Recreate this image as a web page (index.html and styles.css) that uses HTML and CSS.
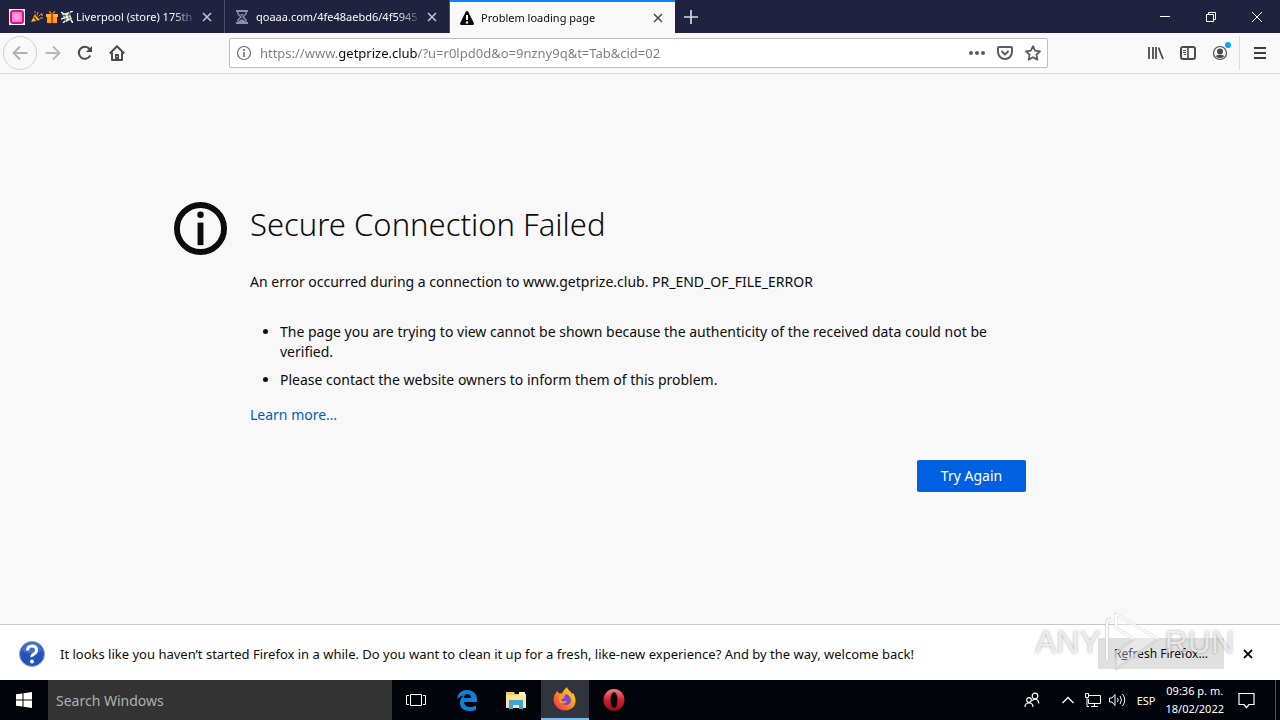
FILE: index.html
```html
<!DOCTYPE html>
<html lang="en">
<head>
    <meta charset="UTF-8">
    <meta name="viewport" content="width=device-width, initial-scale=1.0">
    <title>Problem loading page</title>
    <link rel="stylesheet" href="styles.css">
</head>
<body>
    <!-- Tabs -->
    <header class="tab-bar">
        <div class="tab">
            <svg class="favicon" width="16" height="16" viewBox="0 0 16 16"><rect width="16" height="16" fill="#fff"/><rect x="2" y="2" width="12" height="12" rx="2" fill="#ff7fd0" stroke="#e0108c" stroke-width="2"/><rect x="5" y="5" width="6" height="6" fill="#ff9be0"/></svg>
            <span class="tab-title">
                <svg width="12" height="12" viewBox="0 0 12 12"><path d="M0 11L4 3l5 6z" fill="#ffb52b"/><path d="M3 6l3 4M5 4l4 4" stroke="#6b3a10" stroke-width="1.500"/><path d="M6 4l1-3M8 5l3-3M9 7h3" stroke="#d8a03a"/><circle cx="4" cy="1" r="1" fill="#e53c53"/><circle cx="11" cy="4" r="1" fill="#3fa2e8"/></svg>
                <svg width="12" height="12" viewBox="0 0 12 12"><path d="M1 4h10v8H1z" fill="#ffa000"/><path d="M0 3h12v3H0z" fill="#ffb52b"/><path d="M5 3h2v9H5z" fill="#e53c1c"/><path d="M6 3C3 3 2 0 4 0l2 3 2-3c2 0 1 3-2 3z" fill="#ff7a1a"/></svg>
                <svg width="12" height="12" viewBox="0 0 12 12"><path d="M1 3l7-2 3 7-6 3z" fill="#e6edc8"/><path d="M2 4l7 3M4 9l5-7" stroke="#4d7350" stroke-width="1.500"/><path d="M0 1l3 2M0 8l3-1M2 12l2-2M9 1l3-1M10 9l2 3" stroke="#fff" stroke-width="1.500"/><circle cx="6" cy="6" r="1.500" fill="#fff"/></svg>
                Liverpool (store) 175th
            </span>
            <button class="tab-close" aria-label="Close tab"><svg width="10" height="10" viewBox="0 0 10 10"><path d="M1 1l8 8M9 1L1 9" stroke="currentColor" stroke-width="1.500"/></svg></button>
        </div>
        <div class="tab">
            <svg class="favicon" width="16" height="16" viewBox="0 0 16 16"><path d="M2 1h12v2H2zM2 13h12v2H2z" fill="#8f8fa6"/><path d="M4 3v2l3 3-3 3v2M12 3v2L9 8l3 3v2" fill="none" stroke="#8f8fa6" stroke-width="1.400"/><path d="M5 12l3-2 3 2v1H5zM6 5h4L8 7z" fill="#8f8fa6"/></svg>
            <span class="tab-title">qoaaa.com/4fe48aebd6/4f5945</span>
            <button class="tab-close" aria-label="Close tab"><svg width="10" height="10" viewBox="0 0 10 10"><path d="M1 1l8 8M9 1L1 9" stroke="currentColor" stroke-width="1.500"/></svg></button>
        </div>
        <div class="tab active">
            <svg class="favicon" width="16" height="16" viewBox="0 0 16 16"><path d="M8 1c.6 0 1 .3 1.300.8l5.500 11.200c.4 1-.1 2-1.200 2H2.400c-1.100 0-1.600-1-1.200-2L6.700 1.800C7 1.300 7.400 1 8 1z" fill="#0c0c0d"/><path d="M8 5v5" stroke="#fff" stroke-width="2"/><circle cx="8" cy="12.500" r="1.200" fill="#fff"/></svg>
            <span class="tab-title">Problem loading page</span>
            <button class="tab-close" aria-label="Close tab"><svg width="10" height="10" viewBox="0 0 10 10"><path d="M1 1l8 8M9 1L1 9" stroke="currentColor" stroke-width="1.500"/></svg></button>
        </div>
        <button class="new-tab" aria-label="New tab"><svg width="14" height="14" viewBox="0 0 14 14"><path d="M7 0v14M0 7h14" stroke="currentColor" stroke-width="1.700"/></svg></button>
        <div class="window-controls">
            <button aria-label="Minimize"><svg width="10" height="10" viewBox="0 0 10 10"><path d="M0 4.500h10" stroke="#fff"/></svg></button>
            <button aria-label="Restore"><svg width="10" height="10" viewBox="0 0 10 10"><path d="M.5 2.500h7v7h-7zM2.500 2.500v-2h7v7h-2" fill="none" stroke="#fff"/></svg></button>
            <button aria-label="Close"><svg width="10" height="10" viewBox="0 0 10 10"><path d="M0 0l10 10M10 0L0 10" stroke="#fff"/></svg></button>
        </div>
    </header>

    <!-- Toolbar -->
    <nav class="toolbar">
        <div class="nav-buttons">
            <button class="back" aria-label="Back" disabled><svg width="16" height="16" viewBox="0 0 16 16"><path d="M15.500 8H1.500M8 1.500L1.500 8 8 14.500" fill="none" stroke="#b1b1b3" stroke-width="2"/></svg></button>
            <button aria-label="Forward" disabled><svg width="16" height="16" viewBox="0 0 16 16"><path d="M.5 8h14M8 1.500L14.500 8 8 14.500" fill="none" stroke="#b8b8ba" stroke-width="2"/></svg></button>
            <button aria-label="Reload"><svg width="16" height="16" viewBox="0 0 16 16"><path d="M13.200 10.500A6 6 0 1 1 12.500 4" fill="none" stroke="#4a4a4d" stroke-width="2"/><path d="M15 1v6H9z" fill="#4a4a4d"/></svg></button>
            <button aria-label="Home"><svg width="16" height="16" viewBox="0 0 16 16"><path d="M.8 8.500L8 1.300l7.200 7.200M3 7.500V15h10V7.500" fill="none" stroke="#4a4a4d" stroke-width="2" stroke-linejoin="round"/><path d="M6 9h4v6H6z" fill="#4a4a4d"/><path d="M8 11v1" stroke="#fff"/></svg></button>
        </div>
        <div class="url-bar">
            <svg width="16" height="16" viewBox="0 0 16 16"><circle cx="8" cy="8" r="6.500" fill="none" stroke="#6b6b6e" stroke-width="1.200"/><path d="M8 7v5M8 4v2" stroke="#6b6b6e" stroke-width="1.600"/></svg>
            <input class="url-input" type="text" aria-label="Address" value="https://www.getprize.club/?u=r0lpd0d&amp;o=9nzny9q&amp;t=Tab&amp;cid=02">
            <button aria-label="Page actions"><svg width="16" height="16" viewBox="0 0 16 16" fill="#5b5b5e"><circle cx="2" cy="8" r="2"/><circle cx="8" cy="8" r="2"/><circle cx="14" cy="8" r="2"/></svg></button>
            <button aria-label="Save to Pocket"><svg width="16" height="16" viewBox="0 0 16 16" fill="none" stroke="#5b5b5e" stroke-width="2" stroke-linecap="round" stroke-linejoin="round"><path d="M2 2h12q1 0 1 1v4a7 7 0 0 1-14 0V3q0-1 1-1z"/><path d="M5 6.500l3 3 3-3"/></svg></button>
            <button aria-label="Bookmark"><svg width="16" height="16" viewBox="0 0 16 16"><path d="M8 1.200l2.100 4.400 4.900.7-3.500 3.400.8 4.900L8 12.300l-4.300 2.300.8-4.900L1 6.300l4.900-.7z" fill="none" stroke="#5b5b5e" stroke-width="1.800" stroke-linejoin="round"/></svg></button>
        </div>
        <div class="tools">
            <button aria-label="Library"><svg width="16" height="16" viewBox="0 0 16 16"><path d="M1 2v12M5 2v12M8 2v12M10.500 2.500L15 14" stroke="#4a4a4d" stroke-width="1.800"/></svg></button>
            <button aria-label="Sidebars"><svg width="16" height="16" viewBox="0 0 16 16" fill="none" stroke="#4a4a4d"><rect x="1" y="2" width="14" height="12" rx="2" stroke-width="2"/><path d="M8 2v12" stroke-width="1.600"/><path d="M3 5.500h3M3 7.500h3M4 9.500h2"/></svg></button>
            <button class="account" aria-label="Account"><svg width="16" height="16" viewBox="0 0 16 16"><circle cx="8" cy="8" r="6.500" fill="none" stroke="#4a4a4d" stroke-width="1.200"/><circle cx="8" cy="6.500" r="3" fill="#4a4a4d"/><path d="M3.500 11q4.500-2.500 9 0Q8 15.500 3.500 11z" fill="#4a4a4d"/></svg><span class="badge"></span></button>
            <button class="menu" aria-label="Open menu"><svg width="12" height="12" viewBox="0 0 12 12"><path d="M0 1h12M0 6h12M0 11h12" stroke="#3d3d40" stroke-width="2"/></svg></button>
        </div>
    </nav>

    <main class="content">
        <div class="error-page">
            <svg class="info-icon" width="53" height="53" viewBox="0 0 54 54"><circle cx="27" cy="27" r="24" fill="none" stroke="#0c0c0d" stroke-width="6"/><circle cx="27" cy="13" r="3.300" fill="#0c0c0d"/><path d="M27 21v23" stroke="#0c0c0d" stroke-width="6"/></svg>
            <div class="error-text">
                <h1>Secure Connection Failed</h1>
                <p class="description">An error occurred during a connection to www.getprize.club. PR_END_OF_FILE_ERROR</p>
                <ul>
                    <li>The page you are trying to view cannot be shown because the authenticity of the received data could not be verified.</li>
                    <li>Please contact the website owners to inform them of this problem.</li>
                </ul>
                <a class="learn-more" href="#">Learn more…</a>
                <div class="actions">
                    <button class="try-again">Try Again</button>
                </div>
            </div>
        </div>
    </main>

    <!-- Notification bar -->
    <section class="notification">
        <svg width="28" height="28" viewBox="0 0 28 28"><circle cx="14" cy="14" r="12.500" fill="#2352b8" stroke="#8aa5dc"/><path d="M4 11a10 9 0 0 1 20 0q-10 5-20 0z" fill="#3f6fce"/><path d="M9.500 10.500q0-4.500 4.500-4.500t4.500 4q0 2.500-2.500 4t-2 3" fill="none" stroke="#fff" stroke-width="3"/><circle cx="14" cy="21.500" r="2" fill="#fff"/></svg>
        <p>It looks like you haven’t started Firefox in a while. Do you want to clean it up for a fresh, like-new experience? And by the way, welcome back!</p>
        <button class="refresh">R<u>e</u>fresh Firefox…</button>
        <button class="dismiss" aria-label="Dismiss"><svg width="10" height="10" viewBox="0 0 10 10"><path d="M1 1l8 8M9 1L1 9" stroke="#111" stroke-width="1.800"/></svg></button>
        <div class="watermark">
            <span>ANY</span>
            <svg width="60" height="64" viewBox="0 0 60 64"><path d="M13 4l42 25-42 30V42l18-13-18-11z" fill="#fff" fill-opacity=".3" stroke="#d4d4d4" stroke-opacity=".8" stroke-width="3" stroke-linejoin="round"/><path d="M4 50V13q0-3 4-3" fill="none" stroke="#d4d4d4" stroke-opacity=".8" stroke-width="4"/><path d="M4 50V13q0-3 4-3M13 4v14l18 11M13 4l42 25" fill="none" stroke="#fff" stroke-opacity=".9" stroke-width="2"/></svg>
            <span>RUN</span>
        </div>
    </section>

    <!-- Taskbar -->
    <footer class="taskbar">
        <button class="start" aria-label="Start"><svg width="16" height="16" viewBox="0 0 16 16" fill="#fff"><path d="M0 2.300L6.500 1.400v6.100H0zM7.500 1.200L16 0v7.500H7.500zM0 8.500h6.500v6.100L0 13.700zM7.500 8.500H16V16l-8.500-1.200z"/></svg></button>
        <input class="search" type="text" placeholder="Search Windows" aria-label="Search Windows">
        <div class="apps">
            <button class="task-view" aria-label="Task View"><svg width="20" height="14" viewBox="0 0 20 14" fill="none" stroke="#fff"><path d="M4.500 1.500h11v11h-11zM3 2.500H.5v9H3M17 2.500h2.500v9H17"/></svg></button>
            <button aria-label="Edge"><svg width="22" height="22" viewBox="0 0 22 22"><path d="M1 10C2 4 6 1 11 1c6 0 10 4 10 9v3H8c0 3 3 5 6 5 2 0 4-.5 6-1.500v4c-2 1-4 1.500-7 1.500-6 0-9-4-9-8 0-4 2-6 4-7.500C5 7 2.500 8 1 10zm7-1h7c0-3-1.500-4-3.500-4S8 6.500 8 9z" fill="#0f7fdc"/></svg></button>
            <button aria-label="File Explorer"><svg width="22" height="20" viewBox="0 0 22 20"><path d="M1 2h8l1 2h11v14H1z" fill="#f3cc6a"/><path d="M1 5h20v13H1z" fill="#ffe49a"/><path d="M4 10h14v9h-4v-4H8v4H4z" fill="#3da5d2"/><path d="M14 2h6v3h-6z" fill="#fff0c2"/></svg></button>
            <button class="running" aria-label="Firefox"><svg width="24" height="24" viewBox="0 0 24 24"><defs><linearGradient id="fox" x1="1" y1="0" x2="0" y2="1"><stop offset="0" stop-color="#ffe636"/><stop offset=".5" stop-color="#ff8a1e"/><stop offset="1" stop-color="#f0225c"/></linearGradient></defs><path d="M4 4c1 1 1.500 1.500 2 2.500 1.500-.5 2.500 0 3 0C10 4 12 2 14 0c.5 3 4 4 5 7l1-1c5 7 3 17-8 17.500C3 23.500-2 14 2 7c.5 0 1-1 2-3z" fill="url(#fox)"/><path d="M7 12c0-3 3-2 5-3 0-2 2-2 3-1 5 4 3 10-2 10-4 0-6-3-6-6z" fill="#7546dc"/><path d="M6 9c2-1 4 0 6 1-1 2-3 1-4 3 2 2 4 2 6 0 0 4-6 5-8 1z" fill="#ff9a22"/></svg></button>
            <button aria-label="Opera"><svg width="22" height="22" viewBox="0 0 22 22"><defs><linearGradient id="opera" x1="0" y1="0" x2="0" y2="1"><stop offset="0" stop-color="#f3808a"/><stop offset=".5" stop-color="#d41f2d"/><stop offset="1" stop-color="#8c0c16"/></linearGradient></defs><ellipse cx="11" cy="11" rx="10.500" ry="11" fill="url(#opera)"/><ellipse cx="11" cy="11" rx="3.500" ry="8" fill="#08080c"/></svg></button>
        </div>
        <div class="tray">
            <svg width="16" height="16" viewBox="0 0 16 16" fill="none" stroke="#fff" stroke-width="1.200"><circle cx="11" cy="4" r="2.800"/><circle cx="5" cy="8" r="2.300"/><path d="M1 15q0-4 4-4t4 4M8 8.500q6-3.500 7 3"/></svg>
            <svg class="chevron" width="12" height="8" viewBox="0 0 12 8" fill="none" stroke="#fff" stroke-width="1.300"><path d="M.5 7L6 1.500 11.500 7"/></svg>
            <svg width="17" height="16" viewBox="0 0 17 16" fill="none" stroke="#fff"><path d="M5 3.500h11.500v8H4.500V7M10.500 11.500v3M7 14.500h7M1.500 1.500h3v4h-3zM3 5.500v9h2"/></svg>
            <svg width="17" height="14" viewBox="0 0 17 14" fill="none" stroke="#fff"><path d="M.5 5H3l3-3.500v11L3 9H.5zM8.500 5q1.500 2 0 4M11 3q3 4 0 8M13.500 1q4.500 6 0 12"/></svg>
            <span class="lang">ESP</span>
            <time class="clock" datetime="2022-02-18T21:36">09:36 p. m.<br>18/02/2022</time>
            <svg width="17" height="17" viewBox="0 0 17 17" fill="none" stroke="#fff" stroke-width="1.200"><path d="M1 1.500h15v11h-5L8.500 15.500 6 12.500H1z"/></svg>
        </div>
    </footer>
</body>
</html>
```
FILE: styles.css
```css
* {
    box-sizing: border-box;
}
body {
    font-family: "Noto Sans", "Open Sans", sans-serif;
    font-size: 14px;
    color: #0c0c0d;
    background: #f9f9fa;
    margin: 0;
    min-height: 100vh;
    display: flex;
    flex-direction: column;
}
button {
    font: inherit;
    color: inherit;
    background: none;
    border: none;
    padding: 0;
    display: flex;
    align-items: center;
    justify-content: center;
}
svg {
    flex: none;
}

/* Tabs */
.tab-bar {
    display: flex;
    height: 33px;
    background: #202340;
    color: #f9f9fa;
    font-size: 11px;
}
.tab {
    display: flex;
    align-items: center;
    flex: 0 1 225px;
    min-width: 0;
    padding: 0 9px;
    border-right: 1px solid #4d4f68;
}
.tab-title {
    display: flex;
    align-items: center;
    gap: 3px;
    flex: 1;
    min-width: 0;
    margin-left: 6px;
    overflow: hidden;
    white-space: nowrap;
    mask-image: linear-gradient(to left, transparent, #000 24px);
}
.tab-close {
    width: 16px;
    height: 24px;
    margin-left: 2px;
    color: #c8c8d4;
}
.tab.active {
    background: #f9f9fa;
    color: #0c0c0d;
    border-top: 2px solid #0a84ff;
    border-right: none;
}
.active .tab-close {
    color: #4a4a4d;
}
.new-tab {
    width: 32px;
    color: #d8d8e2;
}
.window-controls {
    display: flex;
    margin-left: auto;
}
.window-controls button {
    width: 46px;
}

/* Toolbar */
.toolbar {
    display: flex;
    align-items: center;
    height: 41px;
    background: #f9f9fa;
    border-bottom: 1px solid #dcdcdf;
}
.nav-buttons {
    display: flex;
    align-items: center;
    flex: 1;
    padding-left: 3px;
}
.nav-buttons button {
    width: 32px;
    height: 34px;
}
.nav-buttons .back {
    width: 34px;
    border: 1px solid #d0d0d3;
    border-radius: 50%;
}
.url-bar {
    display: flex;
    align-items: center;
    gap: 12px;
    width: 64%;
    max-width: 821px;
    height: 30px;
    margin-right: 6px;
    padding: 0 6px;
    background: #fff;
    border: 1px solid #bdbdc0;
    border-radius: 2px;
}
.url-input {
    flex: 1;
    min-width: 0;
    height: 24px;
    margin-left: -4px;
    padding: 0;
    border: none;
    outline: none;
    font: inherit;
    font-size: 13px;
    /* host name is darker than the rest of the address */
    background: linear-gradient(to right, #7c7c80 78px, #0c0c0d 78px, #0c0c0d 157px, #7c7c80 157px);
    background-clip: text;
    -webkit-background-clip: text;
    -webkit-text-fill-color: transparent;
}
.tools {
    display: flex;
    align-items: center;
    justify-content: flex-end;
    flex: 1;
}
.tools button {
    position: relative;
    width: 32px;
    height: 34px;
}
.badge {
    position: absolute;
    top: 6px;
    right: 5px;
    width: 6px;
    height: 6px;
    border-radius: 50%;
    background: #00a8f0;
}
.tools .menu {
    width: 41px;
    margin-left: 3px;
    border-left: 1px solid #dcdcdf;
}

/* Error page */
.content {
    flex: 1;
    background: #f8f8f8;
}
.error-page {
    display: flex;
    gap: 23px;
    max-width: 932px;
    margin: 0 auto;
    padding: 128px 80px 0 0;
}
.error-text {
    flex: 1;
    line-height: 20px;
}
h1 {
    margin: 0;
    font-size: 31px;
    font-weight: 300;
    line-height: 44px;
}
.description {
    margin: 26px 0 30px;
}
ul {
    margin: 0;
    padding-left: 30px;
}
li {
    margin-bottom: 8px;
}
.learn-more {
    display: inline-block;
    margin-top: 7px;
    color: #0060b6;
    text-decoration: none;
}
.actions {
    display: flex;
    justify-content: flex-end;
    margin-top: 35px;
}
.try-again {
    min-width: 109px;
    height: 32px;
    color: #fff;
    background: #0060df;
    border-radius: 2px;
}

/* Notification bar */
.notification {
    position: relative;
    display: flex;
    align-items: center;
    height: 56px;
    padding: 2px 24px 0 18px;
    background: #fff;
    border-top: 1px solid #c8c8c8;
    font-size: 12px;
}
.notification p {
    flex: 1;
    margin: 0 0 0 14px;
    font-size: 13px;
}
.refresh {
    display: block;
    width: 126px;
    height: 31px;
    background: #e0e0e0;
}
.dismiss {
    width: 16px;
    height: 24px;
    margin-left: 16px;
}
.watermark {
    position: absolute;
    right: 46px;
    bottom: 6px;
    display: flex;
    align-items: center;
    gap: 2px;
    font-family: "Liberation Sans Narrow", "Liberation Sans", sans-serif;
    font-size: 32px;
    color: rgba(255, 255, 255, 0.7);
    text-shadow: 0 0 3px rgba(0, 0, 0, 0.35);
    pointer-events: none;
}

/* Taskbar */
.taskbar {
    display: flex;
    height: 40px;
    background: #02040c;
    color: #fff;
}
.start {
    width: 48px;
}
.search {
    flex: 0 1 344px;
    min-width: 0;
    padding: 0 8px;
    border: none;
    background: #333;
    color: #fff;
    font: inherit;
}
.search::placeholder {
    color: #b0b0b0;
}
.apps {
    display: flex;
    gap: 1px;
}
.apps button {
    width: 48px;
}
.apps .task-view {
    margin-right: 2px;
}
.apps .running {
    background: #30343c;
    border-bottom: 2px solid #76b9ed;
}
.tray {
    display: flex;
    align-items: center;
    gap: 8px;
    margin-left: auto;
    margin-right: 4px;
    padding-right: 20px;
    border-right: 1px solid #50525a;
    font-size: 11px;
}
.chevron {
    margin-left: 14px;
    margin-right: 2px;
}
.lang {
    margin: 0 2px 0 3px;
}
.clock {
    line-height: 18px;
    text-align: center;
    margin-right: 6px;
}
```
